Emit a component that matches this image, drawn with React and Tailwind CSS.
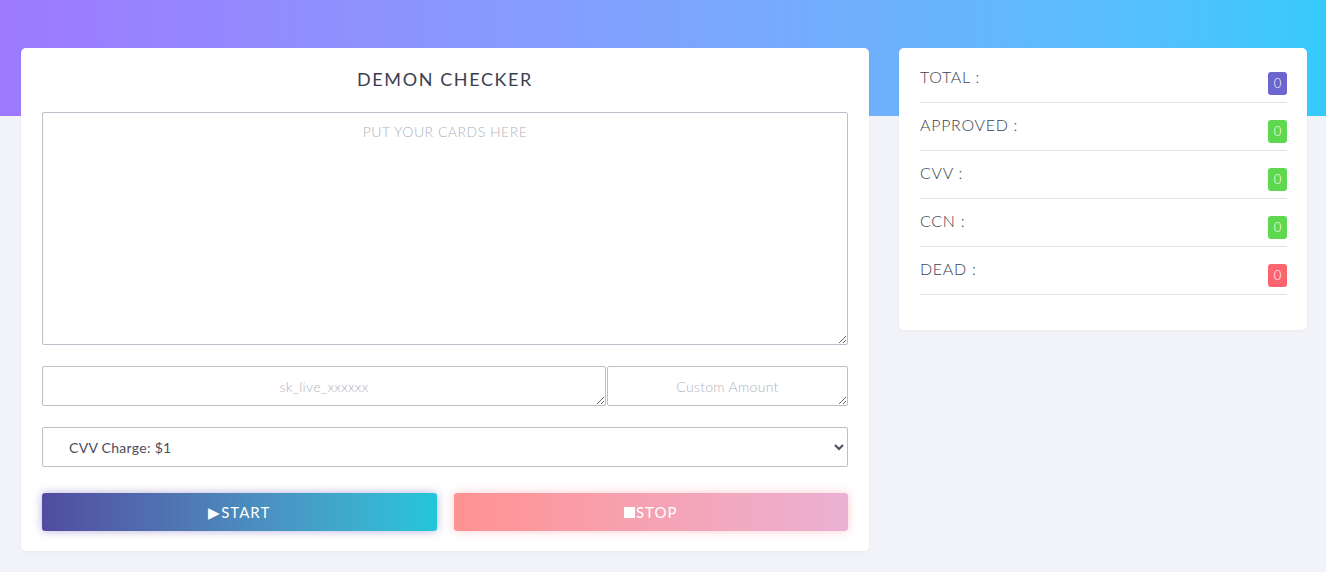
import React from 'react';

const stats = [
  { label: 'TOTAL :', value: 0, color: 'bg-[#6b66cd]' },
  { label: 'APPROVED :', value: 0, color: 'bg-[#5ed94f]' },
  { label: 'CVV :', value: 0, color: 'bg-[#5ed94f]' },
  { label: 'CCN :', value: 0, color: 'bg-[#5ed94f]' },
  { label: 'DEAD :', value: 0, color: 'bg-[#fc6470]' },
];

const field =
  'block h-[40px] rounded-[2px] border border-[#bdc0cb] px-3 pt-[9px] text-center text-[14px] font-light tracking-[0.3px] outline-none placeholder:text-[#b0b3be]';

export default function App() {
  return (
    <div className="min-h-screen bg-[#f2f3f8] font-['Lato',sans-serif] text-[#3c3f51]">
      <div className="h-[116px] bg-gradient-to-r from-[#9d79fe] to-[#36cafc]" />

      <div className="-mt-[68px] flex items-start gap-[30px] pl-[21px]">
        {/* checker card */}
        <section className="w-[848px] rounded-[5px] bg-white px-[21px] pb-[20px] pt-[17px] shadow-[0_1px_3px_rgba(0,0,0,0.04)]">
          <h1 className="mb-[19px] text-center text-[18px] leading-[28px] tracking-[1.6px]">DEMON CHECKER</h1>

          <textarea
            placeholder="PUT YOUR CARDS HERE"
            className="block h-[233px] w-full rounded-[2px] border border-[#bdc0cb] px-3 pt-[8px] text-center text-[14px] font-light tracking-[0.5px] outline-none placeholder:text-[#b0b3be]"
          />

          <div className="mt-[21px] flex">
            <textarea placeholder="sk_live_xxxxxx" className={`${field} w-[564px]`} />
            <textarea placeholder="Custom Amount" className={`${field} ml-px flex-1`} />
          </div>

          <select className="mt-[21px] block h-[40px] w-full rounded-[2px] border border-[#bdc0cb] bg-white pl-[22px] pr-[6px] text-[14px] tracking-[0.3px] text-[#4a4d5e] outline-none">
            <option>CVV Charge: $1</option>
          </select>

          <div className="mt-[26px] flex gap-[17px]">
            <button className="flex h-[38px] flex-1 items-center justify-center rounded-[3px] bg-gradient-to-r from-[#504c9e] to-[#22c6da] text-[15px] tracking-[1px] text-white shadow-[0_0_10px_rgba(90,80,170,0.45)]">
              ▶START
            </button>
            <button className="flex h-[38px] flex-1 items-center justify-center rounded-[3px] bg-gradient-to-r from-[#ff9292] to-[#ebb1d3] text-[15px] tracking-[1px] text-white shadow-[0_0_10px_rgba(255,140,150,0.45)]">
              <span className="mr-[1px] inline-block h-[11px] w-[11px] bg-white" />
              STOP
            </button>
          </div>
        </section>

        {/* stats card */}
        <aside className="w-[408px] rounded-[5px] bg-white pb-[35px] pl-[21px] pr-[20px] pt-[7px] shadow-[0_1px_3px_rgba(0,0,0,0.04)]">
          {stats.map((s) => (
            <div key={s.label} className="flex h-[48px] items-start justify-between border-b border-[#e3e4ea]">
              <span className="mt-[10px] text-[16px] font-light leading-[24px] tracking-[0.7px]">{s.label}</span>
              <span className={`mt-[17px] flex h-[23px] w-[19px] items-center justify-center rounded-[3px] text-[13px] font-light text-white ${s.color}`}>
                {s.value}
              </span>
            </div>
          ))}
        </aside>
      </div>
    </div>
  );
}
